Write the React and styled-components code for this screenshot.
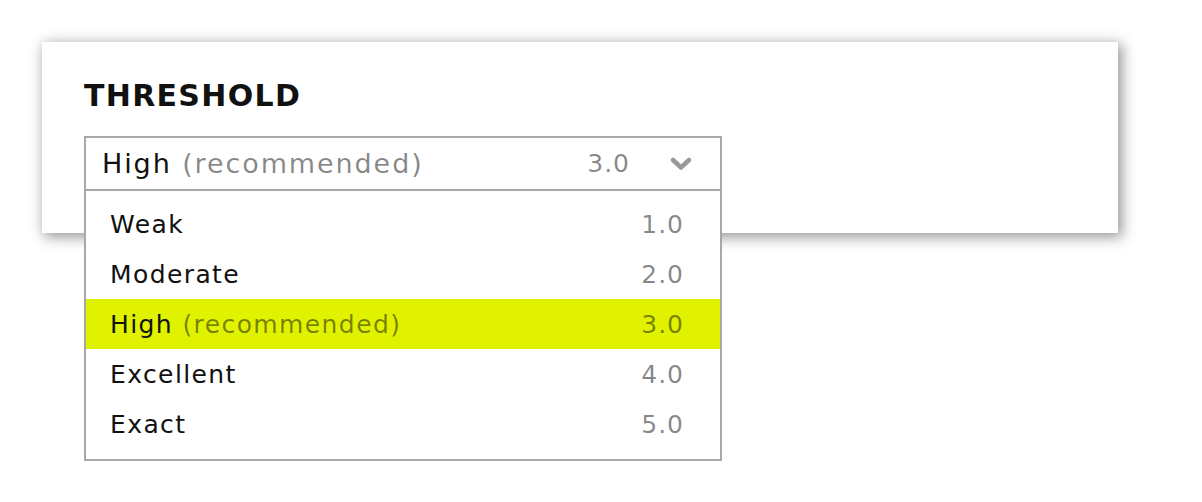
import React from "react";
import styled, { createGlobalStyle } from "styled-components";

const Global = createGlobalStyle`
  html, body { margin: 0; padding: 0; background: #fff; }
  body { font-family: "DejaVu Sans", "Inter", sans-serif; color: #111; }
`;

const Page = styled.div`
  padding: 42px 84px 0 42px;
  width: 1202px;
  min-height: 502px;
  box-sizing: border-box;
`;

const Card = styled.section`
  position: relative;
  background: #fff;
  box-shadow: 3px 3px 13px 1px rgba(0, 0, 0, 0.42);
  padding: 32px 42px 42px;
  height: 191px;
  box-sizing: border-box;
`;

const Title = styled.h2`
  margin: 0 0 18px;
  font-size: 30px;
  font-weight: 700;
  letter-spacing: 1.3px;
  line-height: 44px;
  color: #111;
`;

const SelectWrap = styled.div`
  position: relative;
  width: 638px;
`;

const Trigger = styled.div`
  display: flex;
  align-items: center;
  height: 55px;
  box-sizing: border-box;
  border: 2px solid #a8a8a8;
  padding: 0 28px 0 16px;
  font-size: 27px;
  letter-spacing: 1.9px;
`;

const Label = styled.span`
  flex: 1;
  color: #111;
`;

const Muted = styled.span`
  color: rgba(0, 0, 0, 0.47);
`;

const Value = styled.span`
  color: rgba(0, 0, 0, 0.47);
  font-size: 25px;
  letter-spacing: 1px;
`;

const Chevron = styled.svg`
  margin-left: 40px;
  width: 22px;
  height: 14px;
`;

const Menu = styled.ul`
  position: absolute;
  left: 0;
  right: 0;
  top: 53px;
  margin: 0;
  padding: 8px 0 10px;
  list-style: none;
  background: #fff;
  border: 2px solid #a8a8a8;
  z-index: 2;
`;

const Item = styled.li`
  display: flex;
  align-items: center;
  justify-content: space-between;
  height: 50px;
  padding: 0 36px 0 24px;
  font-size: 25px;
  letter-spacing: 1.4px;
  background: ${(p) => (p.$active ? "#e0f200" : "transparent")};
`;

const options = [
  { label: "Weak", value: "1.0" },
  { label: "Moderate", value: "2.0" },
  { label: "High", note: "(recommended)", value: "3.0", active: true },
  { label: "Excellent", value: "4.0" },
  { label: "Exact", value: "5.0" },
];

export default function App() {
  return (
    <>
      <Global />
      <Page>
        <Card>
          <Title>THRESHOLD</Title>
          <SelectWrap>
            <Trigger>
              <Label>
                High <Muted>(recommended)</Muted>
              </Label>
              <Value>3.0</Value>
              <Chevron viewBox="0 0 22 14">
                <path
                  d="M3 3 L11 10.5 L19 3"
                  fill="none"
                  stroke="#999"
                  strokeWidth="4.5"
                  strokeLinecap="round"
                  strokeLinejoin="round"
                />
              </Chevron>
            </Trigger>
            <Menu>
              {options.map((o) => (
                <Item key={o.label} $active={o.active}>
                  <span>
                    {o.label}
                    {o.note && <Muted> {o.note}</Muted>}
                  </span>
                  <Value>{o.value}</Value>
                </Item>
              ))}
            </Menu>
          </SelectWrap>
        </Card>
      </Page>
    </>
  );
}
